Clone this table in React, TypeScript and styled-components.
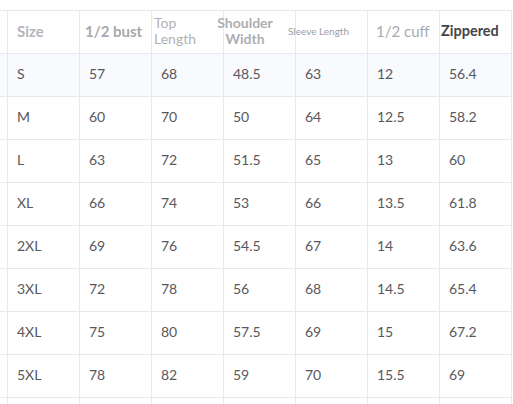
import React from "react";
import styled, { createGlobalStyle } from "styled-components";

const Global = createGlobalStyle`
  html, body { margin: 0; padding: 0; background: #ffffff; }
  body { font-family: Lato, "Open Sans", sans-serif; }
`;

const Grid = styled.div`
  margin-top: 10px;
  display: grid;
  grid-template-columns: 8px repeat(7, 72px);
  grid-auto-rows: 43px;
  width: 512px;
  border-top: 1px solid #e6eaee;
`;

const Row = styled.div<{ $tint?: boolean }>`
  display: contents;
  & > div {
    background: ${(p) => (p.$tint ? "#f8fafd" : "#ffffff")};
  }
`;

const Spacer = styled.div`
  box-sizing: border-box;
  border-right: 1px solid #e6eaee;
  border-bottom: 1px solid #e6eaee;
`;

const Cell = styled.div`
  box-sizing: border-box;
  border-right: 1px solid #e6eaee;
  border-bottom: 1px solid #e6eaee;
  display: flex;
  align-items: center;
  padding-left: 9px;
  padding-bottom: 3px;
  font-size: 14px;
  color: #58585c;
  white-space: nowrap;
`;

const Head = styled.div<{
  $size: number;
  $weight: number;
  $color: string;
  $pl: number;
  $center?: boolean;
  $lh?: number;
}>`
  box-sizing: border-box;
  border-right: 1px solid #e6eaee;
  border-bottom: 1px solid #e6eaee;
  display: flex;
  align-items: center;
  justify-content: ${(p) => (p.$center ? "center" : "flex-start")};
  text-align: ${(p) => (p.$center ? "center" : "left")};
  padding-left: ${(p) => p.$pl}px;
  padding-right: ${(p) => (p.$center ? 29 : 0)}px;
  padding-bottom: 3px;
  font-size: ${(p) => p.$size}px;
  font-weight: ${(p) => p.$weight};
  color: ${(p) => p.$color};
  line-height: ${(p) => p.$lh ?? 1.2};
  white-space: nowrap;
  overflow: visible;
`;

const rows = [
  ["S", "57", "68", "48.5", "63", "12", "56.4"],
  ["M", "60", "70", "50", "64", "12.5", "58.2"],
  ["L", "63", "72", "51.5", "65", "13", "60"],
  ["XL", "66", "74", "53", "66", "13.5", "61.8"],
  ["2XL", "69", "76", "54.5", "67", "14", "63.6"],
  ["3XL", "72", "78", "56", "68", "14.5", "65.4"],
  ["4XL", "75", "80", "57.5", "69", "15", "67.2"],
  ["5XL", "78", "82", "59", "70", "15.5", "69"],
];

export default function App() {
  return (
    <>
      <Global />
      <Grid>
        <Row>
          <Spacer />
          <Head $size={15} $weight={700} $color="#b4b5bb" $pl={9}>Size</Head>
          <Head $size={15} $weight={700} $color="#a9a9ad" $pl={5}>1/2 bust</Head>
          <Head $size={14} $weight={400} $color="#b2b2b6" $pl={2} $lh={1.1}>
            Top<br />Length
          </Head>
          <Head $size={14} $weight={700} $color="#aeaeb2" $pl={0} $center $lh={1.12}>
            Shoulder<br />Width
          </Head>
          <Head $size={10} $weight={400} $color="#9c9ca2" $pl={0} style={{ textIndent: -8 }}>
            Sleeve Length
          </Head>
          <Head $size={15} $weight={400} $color="#a9a9ae" $pl={8}>1/2 cuff</Head>
          <Head $size={14.5} $weight={700} $color="#444448" $pl={1}>Zippered</Head>
        </Row>
        {rows.map((r, i) => (
          <Row key={r[0]} $tint={i === 0}>
            <Spacer />
            {r.map((v, j) => (
              <Cell key={j}>{v}</Cell>
            ))}
          </Row>
        ))}
        <Row>
          <Spacer />
          {Array.from({ length: 7 }).map((_, j) => (
            <Cell key={j}>&nbsp;</Cell>
          ))}
        </Row>
      </Grid>
    </>
  );
}
